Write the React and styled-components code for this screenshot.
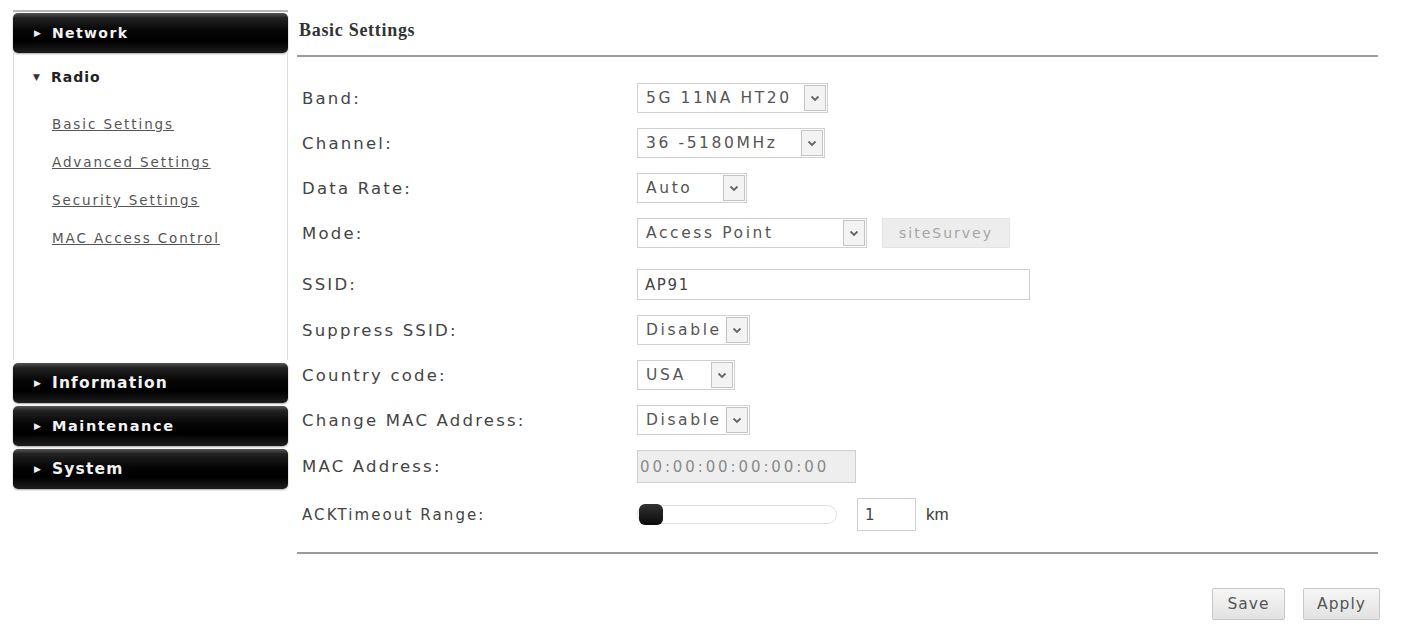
import React from 'react';
import styled, { createGlobalStyle } from 'styled-components';

const GlobalStyle = createGlobalStyle`
  body {
    margin: 0;
    background: #fff;
    font-family: "DejaVu Sans", Verdana, sans-serif;
  }
`;

const Page = styled.div`
  display: flex;
  align-items: flex-start;
  gap: 9px;
  padding: 10px 0 0 13px;
  height: 626px;
  box-sizing: border-box;
`;

/* ---------- left menu ---------- */

const Sidebar = styled.nav`
  width: 275px;
  display: flex;
  flex-direction: column;
  border-top: 2px solid #b8b8b8;
  padding-top: 1px;
`;

const MenuBar = styled.div`
  height: 40px;
  margin-top: ${p => (p.$first ? 0 : '3px')};
  display: flex;
  align-items: center;
  gap: 11px;
  padding-left: 21px;
  border-radius: 5px;
  background: linear-gradient(#555 0%, #222 12%, #050505 45%, #000 70%, #1e1e1e 100%);
  box-shadow: 0 1px 2px rgba(0, 0, 0, 0.35);
  color: #f2f2f2;
  font-weight: bold;
  font-size: ${p => p.$size || 14}px;
  letter-spacing: ${p => p.$spacing || 1.4}px;
`;

const Caret = styled.span`
  font-size: 9px;
  letter-spacing: 0;
  color: ${p => p.$dark ? '#333' : '#eee'};
`;

const SubPanel = styled.div`
  height: 307px;
  border-left: 1px solid #dcdcdc;
  border-right: 1px solid #dcdcdc;
  padding: 16px 0 0 19px;
  box-sizing: border-box;
`;

const SubTitle = styled.div`
  display: flex;
  align-items: center;
  gap: 11px;
  font-size: 14px;
  font-weight: bold;
  letter-spacing: 1px;
  color: #222;
  margin-bottom: 30px;
`;

const SubLinks = styled.div`
  display: flex;
  flex-direction: column;
  gap: 20px;
  padding-left: 19px;
`;

const SubLink = styled.a`
  font-size: 13.5px;
  line-height: 18px;
  letter-spacing: 1.9px;
  color: #555;
  text-decoration: underline;
  cursor: pointer;
`;

/* ---------- settings panel ---------- */

const Main = styled.main`
  width: 1081px;
  display: flex;
  flex-direction: column;
`;

const Heading = styled.h2`
  margin: 0;
  padding: 11px 0 15px 2px;
  line-height: 19px;
  font-family: "Liberation Serif", "Times New Roman", serif;
  font-size: 18px;
  font-weight: bold;
  letter-spacing: 0.7px;
  color: #333;
  border-bottom: 2px solid #9a9a9a;
`;

const Form = styled.div`
  display: flex;
  flex-direction: column;
  gap: 15px;
  padding: 26px 0 0 5px;
`;

const Row = styled.div`
  display: grid;
  grid-template-columns: 335px 1fr;
  align-items: center;
  min-height: 30px;
  margin-top: ${p => p.$shift || 0}px;
`;

const Label = styled.div`
  font-size: ${p => (p.$narrow ? 15 : 16.5)}px;
  letter-spacing: ${p => (p.$narrow ? 2.1 : 2.2)}px;
  color: #444;
`;

const Controls = styled.div`
  display: flex;
  align-items: center;
`;

const SelectBox = styled.div`
  width: ${p => p.$width}px;
  height: 30px;
  box-sizing: border-box;
  display: flex;
  align-items: center;
  border: 1px solid #d0d0d0;
  background: #fff;
  font-size: 15.5px;
  letter-spacing: 2.6px;
  color: #555;
`;

const SelectValue = styled.span`
  flex: 1;
  padding-left: 8px;
  white-space: nowrap;
  overflow: hidden;
`;

const SelectArrow = styled.span`
  width: 22px;
  height: 26px;
  margin-right: 1px;
  display: flex;
  align-items: center;
  justify-content: center;
  border: 1px solid #c4c4c4;
  box-sizing: border-box;
  background: #f3f3f3;
`;

const GhostButton = styled.div`
  margin-left: 15px;
  width: 126px;
  height: 28px;
  display: flex;
  align-items: center;
  justify-content: center;
  background: #ededed;
  border: 1px solid #e4e4e4;
  font-size: 14px;
  letter-spacing: 2px;
  color: #a5a5a5;
`;

const TextBox = styled.div`
  width: ${p => p.$width}px;
  height: ${p => p.$height || 31}px;
  box-sizing: border-box;
  display: flex;
  align-items: center;
  padding-left: ${p => p.$pad ?? 7}px;
  border: 1px solid #cfcfcf;
  background: ${p => (p.$disabled ? '#eeeeee' : '#fff')};
  font-size: 15px;
  letter-spacing: ${p => (p.$disabled ? 2.9 : 1.6)}px;
  color: ${p => (p.$disabled ? '#8a8a8a' : '#444')};
`;

const Track = styled.div`
  position: relative;
  width: 200px;
  height: 19px;
  box-sizing: border-box;
  border: 1px solid #e0e0e0;
  border-radius: 10px;
  background: #fff;
`;

const Thumb = styled.span`
  position: absolute;
  left: 1px;
  top: -2px;
  width: 24px;
  height: 21px;
  border-radius: 6px;
  background: linear-gradient(#333, #0a0a0a);
`;

const Spacer = styled.span`
  width: ${p => p.$width}px;
`;

const Unit = styled.span`
  margin-left: 10px;
  font-family: "Liberation Sans", Arial, sans-serif;
  font-size: 17px;
  color: #444;
`;

const Divider = styled.hr`
  margin: 21px 0 0;
  border: none;
  height: 2px;
  background: #9a9a9a;
`;

const ButtonRow = styled.div`
  display: flex;
  justify-content: flex-end;
  gap: 18px;
  margin: 34px -2px 0 0;
`;

const Button = styled.button`
  height: 32px;
  width: ${p => p.$width}px;
  font-family: "DejaVu Sans", Verdana, sans-serif;
  font-size: 15.5px;
  letter-spacing: 1px;
  color: #555;
  background: linear-gradient(#f6f6f6, #e2e2e2);
  border: 1px solid #c8c8c8;
  border-radius: 2px;
`;

function Chevron() {
  return (
    <svg width="10" height="7" viewBox="0 0 10 7">
      <polyline points="1.5,1.5 5,5 8.5,1.5" fill="none" stroke="#666" strokeWidth="1.8" />
    </svg>
  );
}

function Select({ width, value }) {
  return (
    <SelectBox $width={width}>
      <SelectValue>{value}</SelectValue>
      <SelectArrow>
        <Chevron />
      </SelectArrow>
    </SelectBox>
  );
}

const topMenus = [
  { name: 'Information', size: 15.5, spacing: 1.2 },
  { name: 'Maintenance', size: 14.5, spacing: 1.6 },
  { name: 'System', size: 15.5, spacing: 1.2 }
];

const radioLinks = ['Basic Settings', 'Advanced Settings', 'Security Settings', 'MAC Access Control'];

export default function App() {
  return (
    <>
      <GlobalStyle />
      <Page>
        <Sidebar>
          <MenuBar $first>
            <Caret>▶</Caret>
            Network
          </MenuBar>
          <SubPanel>
            <SubTitle>
              <Caret $dark>▼</Caret>
              Radio
            </SubTitle>
            <SubLinks>
              {radioLinks.map(link => (
                <SubLink key={link}>{link}</SubLink>
              ))}
            </SubLinks>
          </SubPanel>
          {topMenus.map(menu => (
            <MenuBar key={menu.name} $size={menu.size} $spacing={menu.spacing}>
              <Caret>▶</Caret>
              {menu.name}
            </MenuBar>
          ))}
        </Sidebar>

        <Main>
          <Heading>Basic Settings</Heading>
          <Form>
            <Row>
              <Label>Band:</Label>
              <Controls>
                <Select width={191} value="5G 11NA HT20" />
              </Controls>
            </Row>
            <Row>
              <Label>Channel:</Label>
              <Controls>
                <Select width={188} value="36 -5180MHz" />
              </Controls>
            </Row>
            <Row>
              <Label>Data Rate:</Label>
              <Controls>
                <Select width={110} value="Auto" />
              </Controls>
            </Row>
            <Row>
              <Label>Mode:</Label>
              <Controls>
                <Select width={230} value="Access Point" />
                <GhostButton>siteSurvey</GhostButton>
              </Controls>
            </Row>
            <Row $shift={6}>
              <Label>SSID:</Label>
              <Controls>
                <TextBox $width={393}>AP91</TextBox>
              </Controls>
            </Row>
            <Row>
              <Label>Suppress SSID:</Label>
              <Controls>
                <Select width={113} value="Disable" />
              </Controls>
            </Row>
            <Row>
              <Label>Country code:</Label>
              <Controls>
                <Select width={98} value="USA" />
              </Controls>
            </Row>
            <Row>
              <Label>Change MAC Address:</Label>
              <Controls>
                <Select width={113} value="Disable" />
              </Controls>
            </Row>
            <Row>
              <Label>MAC Address:</Label>
              <Controls>
                <TextBox $width={219} $height={33} $pad={2} $disabled>
                  00:00:00:00:00:00
                </TextBox>
              </Controls>
            </Row>
            <Row>
              <Label $narrow>ACKTimeout Range:</Label>
              <Controls>
                <Track>
                  <Thumb />
                </Track>
                <Spacer $width={20} />
                <TextBox $width={59} $height={33}>1</TextBox>
                <Unit>km</Unit>
              </Controls>
            </Row>
          </Form>
          <Divider />
          <ButtonRow>
            <Button $width={73}>Save</Button>
            <Button $width={77}>Apply</Button>
          </ButtonRow>
        </Main>
      </Page>
    </>
  );
}
